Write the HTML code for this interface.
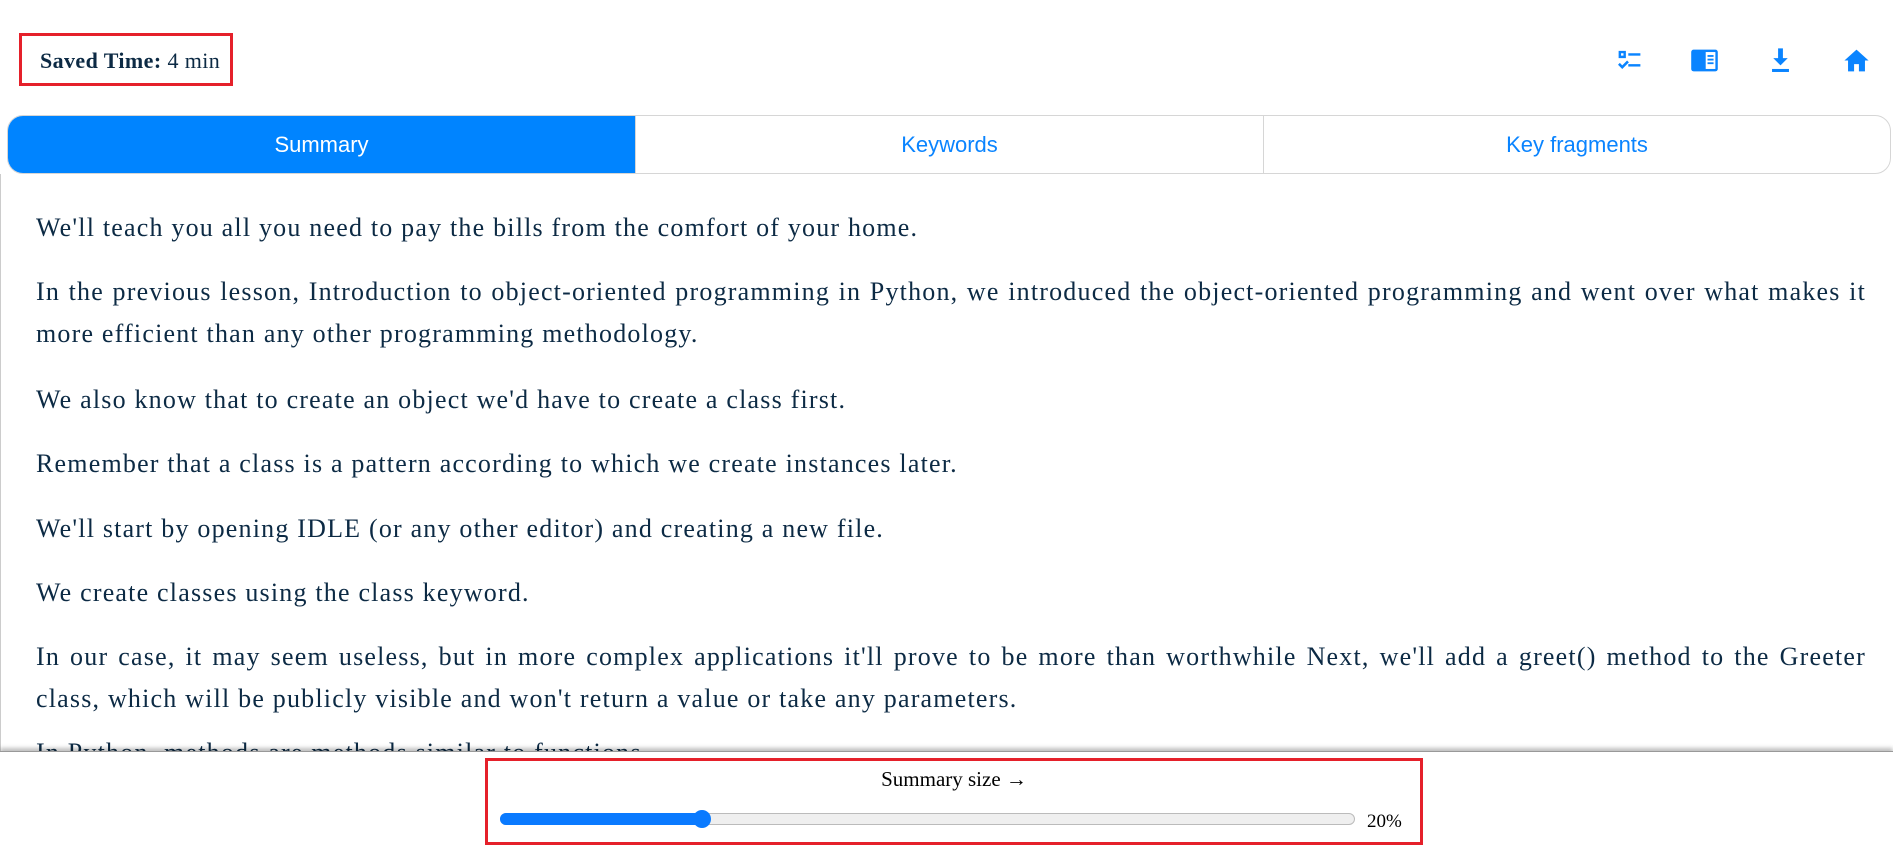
<!DOCTYPE html>
<html><head><meta charset="utf-8"><style>
*{margin:0;padding:0;box-sizing:border-box}
body{width:1893px;height:847px;overflow:hidden;background:#fff;position:relative;font-family:"Liberation Serif",serif;color:#0c2a44}
.saved{position:absolute;left:19px;top:33px;width:214px;height:53px;border:3px solid #e5202a;font-size:22px;letter-spacing:0.4px;padding:12px 0 0 18px;white-space:nowrap}
.icons svg{position:absolute;top:46px;width:29px;height:29px;fill:#0a84ff}
.tabs{position:absolute;left:7px;top:115px;width:1884px;height:59px;border:1px solid #d6d6d6;border-radius:16px;display:flex;overflow:hidden;font-family:"Liberation Sans",sans-serif;font-size:22px}
.tabs div{flex:0 0 auto;display:flex;align-items:center;justify-content:center;color:#0a84ff}
.tabs .a{background:#0084ff;color:#fff;width:627px}
.content{position:absolute;left:0;top:174px;width:1893px;height:580px;border-left:1px solid #ccc;overflow:hidden}
.content p{position:absolute;left:35px;width:1830px;font-size:26px;letter-spacing:1.2px;line-height:42px;text-align:justify}
.bar{position:absolute;left:0;top:751px;width:1893px;height:96px;background:#fff;border-top:1px solid #999;box-shadow:0 -3px 4px rgba(0,0,0,.25)}
.box{position:absolute;left:485px;top:758px;width:938px;height:87px;border:3px solid #e5202a}
</style></head><body>
<div class="saved"><b>Saved Time:</b> 4 min</div>
<div class="icons">
<svg style="left:1615px" viewBox="0 0 24 24"><path d="M3 4h6v6H3z M5 6v2h2V6z" fill-rule="evenodd"/><rect x="11" y="6" width="10" height="2"/><rect x="11" y="15" width="10" height="2"/><path d="M2.5 15.5l1.5-1.5 2 2 4-4 1.5 1.5-5.5 5.5z"/></svg>
<svg style="left:1690px" viewBox="0 0 24 24"><rect x="1" y="3" width="22" height="18" rx="2"/><rect x="13" y="5" width="8" height="14" fill="#fff"/><rect x="14.5" y="7.5" width="5" height="1.5"/><rect x="14.5" y="10.5" width="5" height="1.5"/><rect x="14.5" y="13.5" width="5" height="1.5"/></svg>
<svg style="left:1766px" viewBox="0 0 24 24"><path d="M10 2h4v8h4l-6 6-6-6h4z"/><rect x="5" y="19" width="14" height="2.5"/></svg>
<svg style="left:1842px" viewBox="0 0 24 24"><path d="M12 3L2 12h3v9h5v-6h4v6h5v-9h3z"/></svg>
</div>
<div class="tabs"><div class="a">Summary</div><div style="width:629px;border-left:1px solid #d6d6d6;border-right:1px solid #d6d6d6">Keywords</div><div style="flex:1">Key fragments</div></div>
<div class="content">
<p style="top:33px">We'll teach you all you need to pay the bills from the comfort of your home.</p>
<p style="top:97px">In the previous lesson, Introduction to object-oriented programming in Python, we introduced the object-oriented programming and went over what makes it more efficient than any other programming methodology.</p>
<p style="top:205px">We also know that to create an object we'd have to create a class first.</p>
<p style="top:269px">Remember that a class is a pattern according to which we create instances later.</p>
<p style="top:334px">We'll start by opening IDLE (or any other editor) and creating a new file.</p>
<p style="top:398px">We create classes using the class keyword.</p>
<p style="top:462px">In our case, it may seem useless, but in more complex applications it'll prove to be more than worthwhile Next, we'll add a greet() method to the Greeter class, which will be publicly visible and won't return a value or take any parameters.</p>
<p style="top:558px">In Python, methods are methods similar to functions.</p>
</div>
<div class="bar"></div>
<div class="box">
<div style="position:absolute;left:0;width:932px;top:6px;text-align:center;font-size:21px;color:#000">Summary size →</div>
<div style="position:absolute;left:12px;top:52px;width:855px;height:12px;border-radius:6px;background:#efefef;border:1px solid #bbb"></div>
<div style="position:absolute;left:12px;top:52px;width:205px;height:12px;border-radius:6px;background:#0a7aff"></div>
<div style="position:absolute;left:205px;top:49px;width:18px;height:18px;border-radius:50%;background:#0a7aff"></div>
<div style="position:absolute;left:879px;top:50px;font-size:19px;color:#000">20%</div>
</div>
</body></html>
